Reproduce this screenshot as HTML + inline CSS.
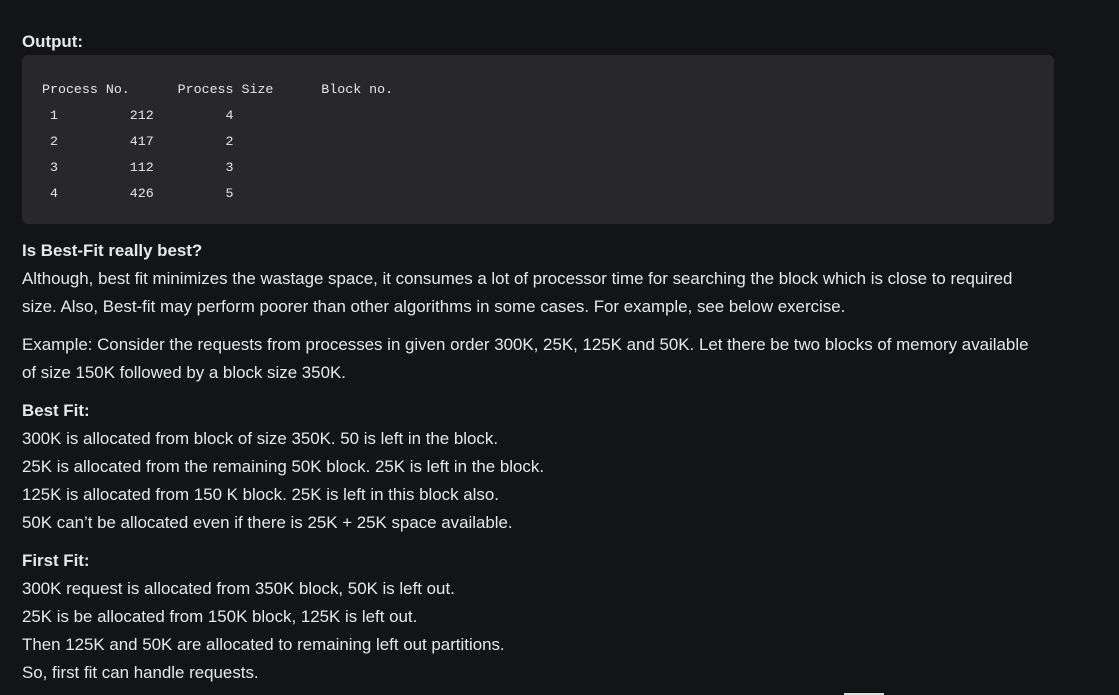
<!DOCTYPE html>
<html><head><style>
html,body{margin:0;padding:0;background:#131418;width:1119px;height:695px;overflow:hidden;position:relative}
body{font-family:"Liberation Sans",sans-serif;color:#e8e8ea;font-size:16.9px;letter-spacing:0}
.t{position:absolute;left:22px;white-space:nowrap;line-height:20px}
b{font-weight:bold}
.box{position:absolute;left:22px;top:55px;width:1032px;height:169px;background:#28282c;border-radius:6px}
pre{position:absolute;left:42px;top:77px;margin:0;font-family:"Liberation Mono",monospace;font-size:13.3px;line-height:26px;color:#e6e6e6;letter-spacing:0}
</style></head><body>
<div class="t" style="top:32px"><b>Output:</b></div>
<div class="box"></div>
<pre>Process No.      Process Size      Block no.
 1         212         4
 2         417         2
 3         112         3
 4         426         5</pre>
<div class="t" style="top:241px"><b>Is Best-Fit really best?</b></div>
<div class="t" style="top:269px">Although, best fit minimizes the wastage space, it consumes a lot of processor time for searching the block which is close to required</div>
<div class="t" style="top:297px">size. Also, Best-fit may perform poorer than other algorithms in some cases. For example, see below exercise.</div>
<div class="t" style="top:335px">Example: Consider the requests from processes in given order 300K, 25K, 125K and 50K. Let there be two blocks of memory available</div>
<div class="t" style="top:363px">of size 150K followed by a block size 350K.</div>
<div class="t" style="top:401px"><b>Best Fit:</b></div>
<div class="t" style="top:429px">300K is allocated from block of size 350K. 50 is left in the block.</div>
<div class="t" style="top:457px">25K is allocated from the remaining 50K block. 25K is left in the block.</div>
<div class="t" style="top:485px">125K is allocated from 150 K block. 25K is left in this block also.</div>
<div class="t" style="top:513px">50K can’t be allocated even if there is 25K + 25K space available.</div>
<div class="t" style="top:551px"><b>First Fit:</b></div>
<div class="t" style="top:579px">300K request is allocated from 350K block, 50K is left out.</div>
<div class="t" style="top:607px">25K is be allocated from 150K block, 125K is left out.</div>
<div class="t" style="top:635px">Then 125K and 50K are allocated to remaining left out partitions.</div>
<div class="t" style="top:663px">So, first fit can handle requests.</div>
<div style="position:absolute;left:844px;top:693px;width:40px;height:2px;background:#ddd"></div>
</body></html>
